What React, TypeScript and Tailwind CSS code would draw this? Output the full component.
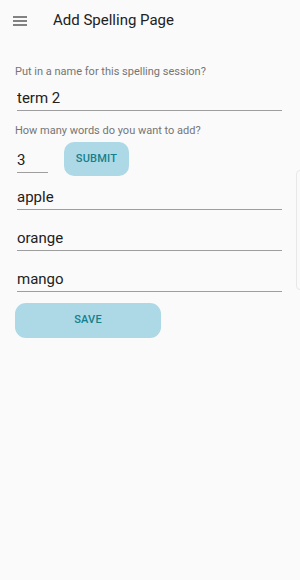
import { useState } from 'react';

export default function App() {
  const [name, setName] = useState('term 2');
  const [count, setCount] = useState('3');
  const [words, setWords] = useState(['apple', 'orange', 'mango']);

  return (
    <div className="relative w-[300px] h-[580px] bg-[#fafafa] overflow-hidden" style={{ fontFamily: 'Roboto, "Noto Sans", sans-serif' }}>
      {/* App bar */}
      <header className="flex items-center h-[41px] px-[13px]">
        <svg width="14" height="10" viewBox="0 0 14 10" fill="none" stroke="#424242" strokeWidth="1.3">
          <line x1="0" y1="1" x2="14" y2="1" />
          <line x1="0" y1="5" x2="14" y2="5" />
          <line x1="0" y1="9" x2="14" y2="9" />
        </svg>
        <span className="ml-[26px] text-[15px] font-normal text-[#212121]">Add Spelling Page</span>
      </header>

      {/* Form */}
      <div className="flex flex-col px-[15px] pt-[23px]">
        <label className="text-[11px] text-[#757575]">Put in a name for this spelling session?</label>
        <input
          className="mt-[8px] mx-[2px] w-[265px] h-[22px] pb-[2px] text-[15px] text-[#212121] bg-transparent border-b border-[#9e9e9e] outline-none"
          value={name}
          onChange={(e) => setName(e.target.value)}
        />

        <label className="mt-[12px] text-[11px] text-[#757575]">How many words do you want to add?</label>
        <div className="flex items-center mt-[3px]">
          <input
            className="mx-[2px] mt-[6px] w-[31px] h-[22px] pb-[2px] text-[15px] text-[#212121] bg-transparent border-b border-[#9e9e9e] outline-none"
            value={count}
            onChange={(e) => setCount(e.target.value)}
          />
          <button className="ml-[14px] w-[65px] h-[34px] rounded-[10px] bg-[#add8e6] text-[11px] font-medium text-[#14808c] tracking-[0.2px]">
            SUBMIT
          </button>
        </div>

        <div className="flex flex-col gap-[18px] mt-[11px]">
          {words.map((w, i) => (
            <input
              key={i}
              className="mx-[2px] w-[265px] h-[23px] pb-[2px] text-[15px] text-[#212121] bg-transparent border-b border-[#9e9e9e] outline-none"
              value={w}
              onChange={(e) => setWords(words.map((x, j) => (j === i ? e.target.value : x)))}
            />
          ))}
        </div>

        <button className="mt-[11px] w-[146px] h-[35px] rounded-[11px] bg-[#add8e6] text-[11px] font-medium text-[#14808c] tracking-[0.2px]">
          SAVE
        </button>
      </div>

      {/* edge panel handle */}
      <div className="absolute left-[296px] top-[170px] w-[10px] h-[120px] rounded-l-[4px] border border-[#e8e8e8] bg-[#fafafa]" />
    </div>
  );
}
